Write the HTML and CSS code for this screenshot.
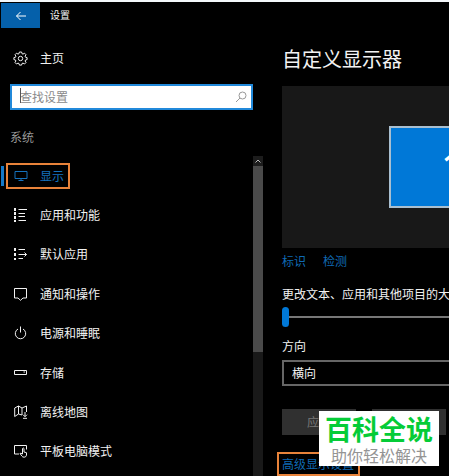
FILE: index.html
```html
<!DOCTYPE html>
<html lang="zh-CN">
<head>
<meta charset="utf-8">
<meta name="viewport" content="width=device-width, initial-scale=1">
<title>设置</title>
<link rel="stylesheet" href="styles.css">
</head>
<body>
<header class="titlebar">
  <button class="back" type="button" aria-label="返回">
    <svg width="12" height="10" viewBox="0 0 12 10"><path d="M11 5H1.5M5.5 1l-4 4 4 4"/></svg>
  </button>
  <span class="titlebar-text">设置</span>
</header>
<div class="layout">
  <aside class="sidebar">
    <a class="home" href="#">
      <svg width="15" height="15" viewBox="0 0 15 15"><circle cx="7.5" cy="7.5" r="2.2"/><path d="M6.4 1h2.2l.4 1.7 1 .4 1.500-.9 1.500 1.500-.9 1.500.4 1 1.600.4v2l-1.600.4-.4 1 .9 1.500-1.500 1.500-1.500-.9-1 .4-.4 1.600H6.400l-.4-1.600-1-.4-1.500.9L2 11.500l.9-1.500-.4-1L.9 8.600v-2l1.600-.4.4-1L2 3.700l1.500-1.500 1.500.9 1-.4z"/></svg>
      <span>主页</span>
    </a>
    <div class="search">
      <input type="search" aria-label="查找设置" placeholder="查找设置">
      <span class="caret"></span>
      <svg class="search-icon" width="12" height="12" viewBox="0 0 12 12"><circle cx="7.500" cy="4.500" r="3.500"/><path d="M5 7 1 11"/></svg>
    </div>
    <h2 class="group">系统</h2>
    <div class="nav-area">
      <nav class="nav">
        <a class="item active" href="#">
          <span class="mark">
            <svg width="14" height="14" viewBox="0 0 14 14"><path d="M1 2.500h12v7H1zM7 9.500v2M4.500 11.500h5"/></svg>
            <span>显示</span>
          </span>
        </a>
        <a class="item" href="#">
          <svg width="14" height="14" viewBox="0 0 14 14"><path d="M4.500 1.500H13M4.500 5.500H11M4.500 8.500H11M4.500 12.500H12"/><path class="dots" d="M1 0v14"/></svg>
          <span>应用和功能</span>
        </a>
        <a class="item" href="#">
          <svg width="14" height="14" viewBox="0 0 14 14"><path d="M4.500 2.500H11M4.500 7.500h8M4.500 11.500H9M10.500 5.500l2 2-2 2"/><path class="squares" d="M1 1v12"/></svg>
          <span>默认应用</span>
        </a>
        <a class="item" href="#">
          <svg width="14" height="14" viewBox="0 0 14 14"><path d="M.5 1.500h12v9.500H9L6.500 13.300 4 11H.5z"/></svg>
          <span>通知和操作</span>
        </a>
        <a class="item" href="#">
          <svg width="14" height="14" viewBox="0 0 14 14"><path d="M6.500.5v6M4 3a5.200 5.200 0 1 0 5 0"/></svg>
          <span>电源和睡眠</span>
        </a>
        <a class="item" href="#">
          <svg width="14" height="14" viewBox="0 0 14 14"><path d="M.5 4.500h12v4H.5zM9.500 6h1.500"/></svg>
          <span>存储</span>
        </a>
        <a class="item" href="#">
          <svg width="14" height="14" viewBox="0 0 14 14"><path d="M8 10 4.500 9 .7 11.500V3l3.800-2L8 3l4.500-2v6M4.500 1v8M8 3v7M11 7v4.500M9 9.700l2 2 2-2M9 13.300h4"/></svg>
          <span>离线地图</span>
        </a>
        <a class="item" href="#">
          <svg width="14" height="14" viewBox="0 0 14 14"><path d="M5 10H.5V1.500h12v4M8.500 10V4.500q1-1 1.500 0V8l2.500.7v2.500q-.5 2-2.300 2-1.700 0-2.400-1.200L6 9.500q.8-.8 2.500.5"/></svg>
          <span>平板电脑模式</span>
        </a>
      </nav>
      <div class="scrollbar" aria-hidden="true">
        <div class="scroll-up"><svg width="6" height="4" viewBox="0 0 6 4"><path d="M.5 3.500 3 1l2.500 2.500"/></svg></div>
        <div class="scroll-track"><div class="scroll-thumb"></div></div>
      </div>
    </div>
  </aside>
  <main class="main">
    <h1>自定义显示器</h1>
    <div class="preview"><div class="monitor">1</div></div>
    <div class="links"><a href="#">标识</a><a href="#">检测</a></div>
    <label class="label" for="scale">更改文本、应用和其他项目的大小</label>
    <input class="slider" id="scale" type="range" min="0" max="100" value="0">
    <label class="label" for="direction">方向</label>
    <select class="select" id="direction"><option>横向</option><option>纵向</option></select>
    <div class="buttons">
      <button type="button">应用</button>
      <button type="button">取消</button>
    </div>
    <a class="advanced" href="#">高级显示设置</a>
  </main>
</div>
<div class="badge"><strong>百科全说</strong><span>助你轻松解决</span></div>
</body>
</html>
```
FILE: styles.css
```css
* {
  box-sizing: border-box;
}

body {
  margin: 0;
  height: 100vh;
  display: flex;
  flex-direction: column;
  position: relative;
  overflow: hidden;
  background: #000;
  border-top: 2px solid #f4f8fb;
  color: #f2f2f2;
  font: 12px/18px "Noto Sans CJK SC", sans-serif;
}

a {
  color: inherit;
  text-decoration: none;
}

button,
input,
select {
  font: inherit;
}

svg {
  flex: none;
  fill: none;
  stroke: currentColor;
  stroke-width: 1;
}

.titlebar {
  display: flex;
  align-items: center;
  gap: 10px;
  height: 26px;
  padding: 1px 0 0 1px;
  font-size: 10px;
  line-height: 16px;
}

.titlebar-text {
  padding-bottom: 2px;
}

.back {
  display: flex;
  align-items: center;
  justify-content: center;
  width: 39px;
  height: 25px;
  padding: 0;
  border: 0;
  background: #0560aa;
  color: #fff;
}

.layout {
  flex: 1;
  min-height: 0;
  display: grid;
  grid-template-columns: 263px 1fr;
  overflow: hidden;
}

.sidebar {
  display: flex;
  flex-direction: column;
  min-height: 0;
}

.home {
  display: flex;
  align-items: center;
  gap: 12px;
  height: 40px;
  margin: 10px 0 6px;
  padding-left: 13px;
}

.search {
  position: relative;
  margin: 0 10px;
}

.search input {
  display: block;
  width: 100%;
  height: 26px;
  padding: 0 24px 2px 8px;
  border: 2px solid #2189da;
  border-radius: 0;
  outline: 0;
  background: #fff;
  color: #222;
  appearance: none;
}

.search input::placeholder {
  color: #8a8a8a;
}

.caret {
  position: absolute;
  left: 10px;
  top: 4px;
  width: 1px;
  height: 15px;
  background: #555;
}

.search-icon {
  position: absolute;
  right: 6px;
  top: 7px;
  color: #999;
}

.group {
  margin: 18px 0 10px;
  padding-left: 10px;
  color: #999;
  font-size: 12px;
  font-weight: 400;
}

.nav-area {
  flex: 1;
  min-height: 0;
  display: flex;
}

.nav {
  flex: 1;
  display: flex;
  flex-direction: column;
  padding-bottom: 5px;
}

.item {
  flex: 1;
  display: flex;
  align-items: center;
  gap: 12px;
  padding-left: 14px;
}

.item.active {
  gap: 2px;
  padding-left: 1px;
  color: #1572bd;
}

.item.active::before {
  content: "";
  width: 3px;
  height: 20px;
  background: #1579c8;
}

.mark {
  display: flex;
  align-items: center;
  gap: 12px;
  height: 26px;
  padding: 0 4px 0 6px;
  border: 2px solid #e8833a;
}

.dots {
  stroke-width: 2;
  stroke-dasharray: 3 1;
}

.squares {
  stroke-width: 2;
  stroke-dasharray: 3 2;
}

.scrollbar {
  display: flex;
  flex-direction: column;
  width: 10px;
}

.scroll-up {
  display: flex;
  align-items: center;
  justify-content: center;
  height: 10px;
  background: #1c1c1c;
  color: #bbb;
}

.scroll-track {
  flex: 1;
  background: #191919;
}

.scroll-thumb {
  height: 60%;
  background: #4a4a4a;
}

.main {
  display: flex;
  flex-direction: column;
  min-width: 382px;
  padding: 16px 20px 0 19px;
}

h1 {
  margin: 0 0 12px;
  font-size: 20px;
  line-height: 30px;
  font-weight: 400;
}

.preview {
  display: flex;
  align-items: center;
  justify-content: center;
  height: 162px;
  background: #181818;
}

.monitor {
  display: flex;
  align-items: center;
  justify-content: center;
  width: 130px;
  height: 82px;
  border: 2px solid #a9bfd0;
  background: #0078d7;
  color: #fff;
  font-family: "Open Sans", sans-serif;
  font-size: 46px;
}

.links {
  display: flex;
  gap: 17px;
  margin: 4px 0 15px;
  color: #0f6ab4;
}

.slider {
  width: 100%;
  height: 20px;
  margin: 4px 0 10px;
  background: transparent;
  appearance: none;
}

.slider::-webkit-slider-runnable-track {
  height: 20px;
  background: linear-gradient(#777, #777) center / 100% 2px no-repeat;
}

.slider::-webkit-slider-thumb {
  width: 7px;
  height: 20px;
  border-radius: 4px;
  background: #0078d7;
  appearance: none;
}

.select {
  height: 26px;
  margin: 5px 0 23px;
  padding: 0 8px;
  border: 2px solid #666;
  border-radius: 0;
  background: #000;
  color: #f2f2f2;
  appearance: none;
}

.buttons {
  display: flex;
  gap: 16px;
}

.buttons button {
  width: 74px;
  height: 26px;
  padding: 0;
  border: 0;
  background: #303030;
  color: #777;
}

.advanced {
  align-self: flex-start;
  height: 24px;
  margin: 17px 0 0 -5px;
  padding: 1px 4px 0 3px;
  border: 2px solid #e8833a;
  color: #0f6ab4;
}

.badge {
  position: absolute;
  right: 10px;
  bottom: 10px;
  display: flex;
  flex-direction: column;
  align-items: center;
  width: 120px;
  height: 55px;
  background: #fff;
}

.badge strong {
  color: #05cc37;
  font-size: 27px;
  line-height: 36px;
  font-weight: 700;
}

.badge span {
  color: #949494;
  font-size: 16px;
  line-height: 16px;
}
```
